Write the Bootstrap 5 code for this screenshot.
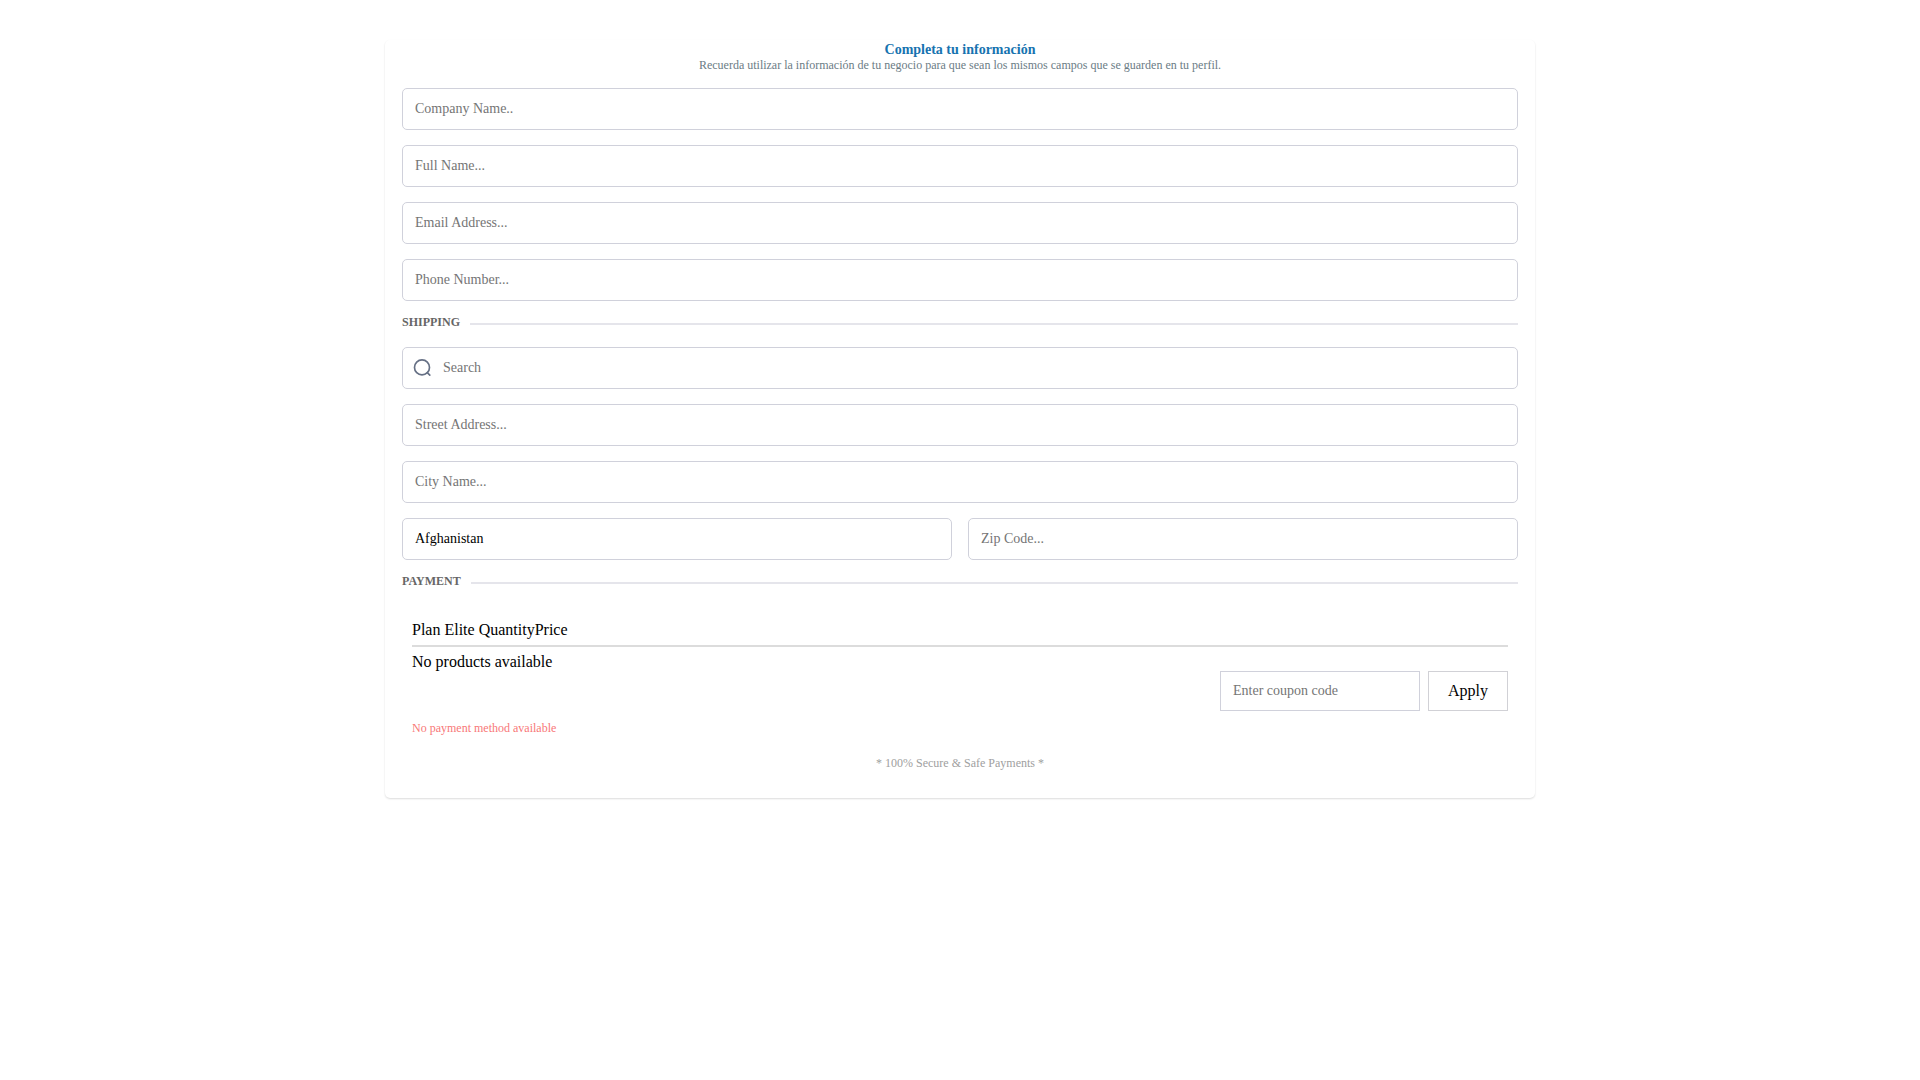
<!DOCTYPE html>
<html lang="es">
<head>
<meta charset="utf-8">
<meta name="viewport" content="width=device-width, initial-scale=1">
<title>Completa tu información</title>
<link href="https://cdn.jsdelivr.net/npm/bootstrap@5.3.0/dist/css/bootstrap.min.css" rel="stylesheet">
<style>
body { font-family: "Liberation Serif", "Times New Roman", serif; font-size: 16px; line-height: 18px; color: #000; background: #fff; }
.order-panel { max-width: 1150px; margin: 40px auto; padding: 2px 17px 28px; border-radius: 5px; background: #fff; box-shadow: 0 1px 2px rgba(0, 0, 0, .14); }
.order-title { font-size: 14px; line-height: 16px; color: #1773b0; }
.fine { font-size: 12px; line-height: 14px; }
.order-sub { color: #6b7c85; }
.stack { display: grid; gap: 15px; }
.form-control, .form-select { height: 42px; padding: 0 12px; border: 1px solid #d0d1db; border-radius: 5px; font-size: 14px; line-height: 16px; color: #000; background: #fff; }
.form-control::placeholder { color: #757575; }
.section-label { font-size: 12px; line-height: 12px; color: #666; }
.section-head { gap: 10px; }
.section-rule { height: 2px; background: #e5e5eb; }
.search-box .form-control { padding-left: 40px; }
.search-icon { left: 10px; top: 11px; width: 20px; height: 20px; pointer-events: none; }
.pay-box { padding: 15px 10px 0; }
.items-head { padding-bottom: 6px; border-bottom: 2px solid #dcdcdc; white-space: pre; }
.items-empty { padding-top: 6px; }
.coupon .form-control { width: 200px; height: 40px; border-radius: 0; }
.coupon .btn { width: 80px; height: 40px; padding: 0; border: 1px solid #d1d1d6; border-radius: 0; font-size: 16px; line-height: 18px; color: #000; background: #fff; }
.pay-error { margin-top: 10px; color: #f87878; }
.secure { margin-top: 21px; color: #a0a0a0; }
</style>
</head>
<body>
<main class="container-fluid px-3">
  <form class="order-panel">
    <header class="text-center mb-3">
      <h1 class="order-title fw-bold mb-0">Completa tu información</h1>
      <p class="order-sub fine mb-0">Recuerda utilizar la información de tu negocio para que sean los mismos campos que se guarden en tu perfil.</p>
    </header>
    <div class="stack">
      <input class="form-control" type="text" placeholder="Company Name.." aria-label="Company Name">
      <input class="form-control" type="text" placeholder="Full Name..." aria-label="Full Name">
      <input class="form-control" type="email" placeholder="Email Address..." aria-label="Email Address">
      <input class="form-control" type="tel" placeholder="Phone Number..." aria-label="Phone Number">
      <div class="section-head d-flex align-items-center">
        <h2 class="section-label fw-bold mb-0 pb-1">SHIPPING</h2>
        <div class="section-rule flex-grow-1"></div>
      </div>
      <div class="search-box position-relative">
        <svg class="search-icon position-absolute" viewBox="0 0 20 20" fill="none" stroke="#667085" stroke-width="1.67" stroke-linecap="round" stroke-linejoin="round" aria-hidden="true"><circle cx="10" cy="9.4" r="7.5"/><path d="M15.3 14.7 17.8 17.2"/></svg>
        <input class="form-control" type="text" placeholder="Search" aria-label="Search">
      </div>
      <input class="form-control" type="text" placeholder="Street Address..." aria-label="Street Address">
      <input class="form-control" type="text" placeholder="City Name..." aria-label="City Name">
      <div class="row gx-3">
        <div class="col-6">
          <select class="form-select" aria-label="Country"><option>Afghanistan</option></select>
        </div>
        <div class="col-6">
          <input class="form-control" type="text" placeholder="Zip Code..." aria-label="Zip Code">
        </div>
      </div>
      <div class="section-head d-flex align-items-center">
        <h2 class="section-label fw-bold mb-0 pb-1">PAYMENT</h2>
        <div class="section-rule flex-grow-1"></div>
      </div>
      <section class="pay-box">
        <div class="items-head"><span>Plan Elite </span><span>Quantity</span><span>Price</span></div>
        <div class="items-empty">No products available</div>
        <div class="coupon d-flex justify-content-end gap-2">
          <input class="form-control" type="text" placeholder="Enter coupon code" aria-label="Coupon code">
          <button class="btn" type="button">Apply</button>
        </div>
        <p class="pay-error fine mb-0">No payment method available</p>
      </section>
    </div>
    <p class="secure fine text-center mb-0">* 100% Secure &amp; Safe Payments *</p>
  </form>
</main>
<script src="https://cdn.jsdelivr.net/npm/bootstrap@5.3.0/dist/js/bootstrap.bundle.min.js"></script>
</body>
</html>
